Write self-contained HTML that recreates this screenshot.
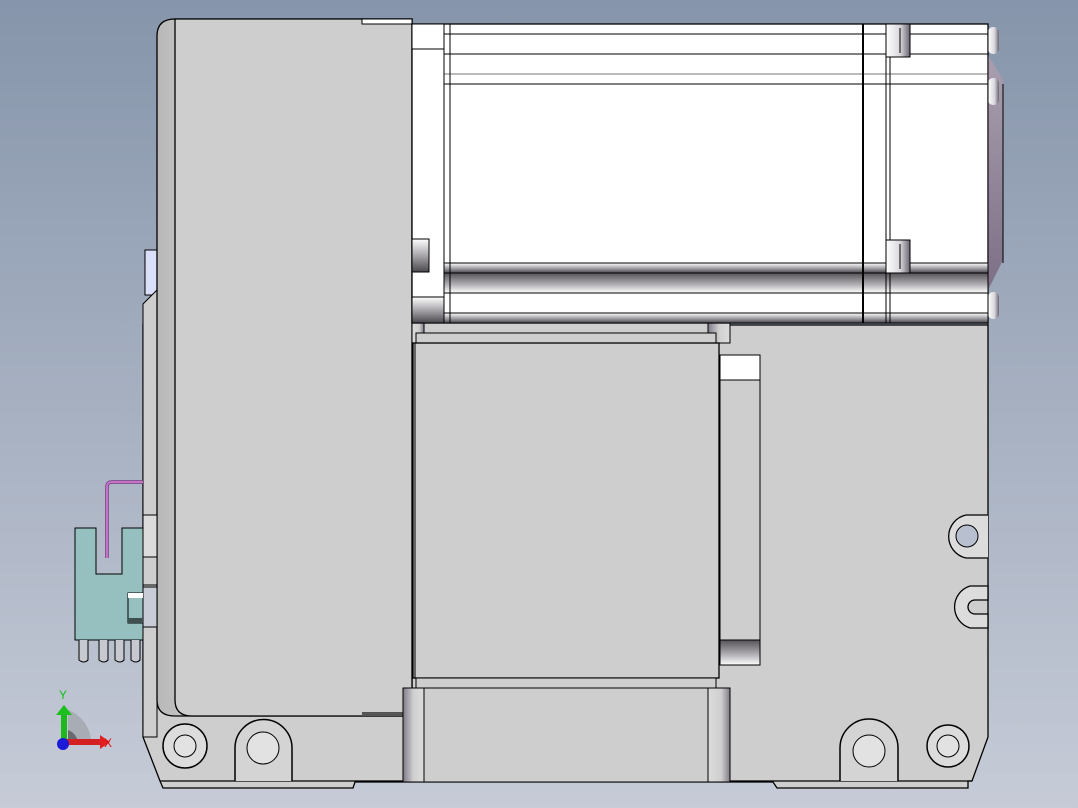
<!DOCTYPE html>
<html><head><meta charset="utf-8"><style>
html,body{margin:0;padding:0;width:1078px;height:808px;overflow:hidden}
svg{display:block}
</style></head><body>
<svg width="1078" height="808" viewBox="0 0 1078 808" xmlns="http://www.w3.org/2000/svg" font-family="Liberation Sans, sans-serif">
<defs>
<linearGradient id="bg" x1="0" y1="0" x2="0" y2="1">
<stop offset="0" stop-color="#8695ab"/><stop offset="1" stop-color="#c6cbd7"/></linearGradient>
<linearGradient id="cyl" x1="0" y1="0" x2="0" y2="1">
<stop offset="0" stop-color="#ffffff"/><stop offset="0.5" stop-color="#a8a6ab"/><stop offset="1" stop-color="#4a474e"/></linearGradient>
<linearGradient id="cyl2" x1="0" y1="0" x2="0" y2="1">
<stop offset="0" stop-color="#555258"/><stop offset="0.6" stop-color="#b5b3b8"/><stop offset="1" stop-color="#ffffff"/></linearGradient>
<linearGradient id="vcol" x1="0" y1="0" x2="1" y2="0">
<stop offset="0" stop-color="#807a88"/><stop offset="0.5" stop-color="#d0d0d0"/><stop offset="1" stop-color="#dcdcdc"/></linearGradient>
<linearGradient id="vcol2" x1="0" y1="0" x2="1" y2="0">
<stop offset="0" stop-color="#dcdcdc"/><stop offset="0.6" stop-color="#cfcfcf"/><stop offset="1" stop-color="#807a88"/></linearGradient>
<linearGradient id="edge" x1="0" y1="0" x2="1" y2="0">
<stop offset="0" stop-color="#b8b8b8"/><stop offset="0.4" stop-color="#dedede"/><stop offset="1" stop-color="#cfcfcf"/></linearGradient>
<linearGradient id="plate" x1="0" y1="0" x2="0" y2="1">
<stop offset="0" stop-color="#aa9fb0"/><stop offset="1" stop-color="#7d6f86"/></linearGradient>
<linearGradient id="bolt" x1="0" y1="0" x2="1" y2="0">
<stop offset="0" stop-color="#ffffff"/><stop offset="0.6" stop-color="#d8d6dc"/><stop offset="1" stop-color="#6b6570"/></linearGradient>
</defs>
<rect width="1078" height="808" fill="url(#bg)"/>

<path d="M143 325 H988 V737 L972 781 H968 V788 H777 L773 782 H355 L353 788 H163 L160 781 L143 737 Z" fill="#cecece" stroke="#000" stroke-width="1.3"/>
<line x1="160" y1="781" x2="972" y2="781" stroke="#000" stroke-width="1.3"/>
<rect x="145" y="250" width="12" height="45" fill="#dbe0fa" stroke="#000"/>
<path d="M143 304 L157 290 V737 H143 Z" fill="#cecece" stroke="#000"/>

<path d="M157 36 Q157 19 175 19 H412 V716 H175 Q157 716 157 700 Z" fill="url(#edge)" stroke="#000" stroke-width="1.3"/>
<path d="M175 19 H412 V716 H192 Q175 716 175 700 Z" fill="#cecece" stroke="#000" stroke-width="1.3"/>
<rect x="362" y="19" width="50" height="5" fill="#fff" stroke="#000"/>
<rect x="362" y="712" width="50" height="4" fill="#555"/>

<rect x="412" y="323" width="318" height="20" fill="#cecece" stroke="#000"/>
<rect x="412" y="323" width="12" height="20" fill="url(#vcol2)" stroke="#000"/>
<rect x="708" y="323" width="22" height="20" fill="url(#vcol)" stroke="#000"/>
<rect x="416" y="333" width="300" height="10" fill="#cecece" stroke="#000"/>
<rect x="413" y="343" width="306" height="335" fill="#cecece" stroke="#000" stroke-width="1.3"/>
<line x1="415" y1="343" x2="415" y2="678" stroke="#000"/>
<rect x="720" y="355" width="40" height="25" fill="#fff" stroke="#000"/>
<rect x="720" y="380" width="40" height="260" fill="#cecece" stroke="#000"/>
<rect x="720" y="640" width="40" height="25" fill="url(#cyl2)" stroke="#000"/>
<rect x="416" y="678" width="300" height="10" fill="#cecece" stroke="#000"/>
<rect x="403" y="688" width="21" height="94" fill="url(#vcol)" stroke="#000"/>
<rect x="708" y="688" width="22" height="94" fill="url(#vcol2)" stroke="#000"/>
<rect x="424" y="688" width="284" height="94" fill="#cecece" stroke="#000"/>

<rect x="412" y="24" width="576" height="299" fill="#fff" stroke="#000" stroke-width="1.3"/>
<rect x="412" y="24" width="32" height="25" fill="#fff" stroke="#000"/>
<rect x="412" y="297" width="32" height="26" fill="url(#cyl)" stroke="#000"/>
<rect x="444" y="263" width="544" height="10" fill="url(#cyl)" stroke="#000"/>
<rect x="444" y="273" width="544" height="20" fill="url(#cyl2)" stroke="#000"/>
<rect x="444" y="293" width="544" height="20" fill="#fff" stroke="#000"/>
<rect x="444" y="313" width="544" height="10" fill="url(#cyl)" stroke="#000"/>
<line x1="444" y1="34" x2="988" y2="34" stroke="#000"/>
<line x1="444" y1="54" x2="988" y2="54" stroke="#000"/>
<line x1="444" y1="74" x2="988" y2="74" stroke="#777"/>
<line x1="444" y1="84" x2="988" y2="84" stroke="#000"/>
<line x1="444" y1="24" x2="444" y2="323" stroke="#000"/>
<line x1="450" y1="24" x2="450" y2="323" stroke="#000"/>
<line x1="863" y1="24" x2="863" y2="323" stroke="#000" stroke-width="2"/>
<line x1="886" y1="24" x2="886" y2="323" stroke="#000"/>
<line x1="890" y1="24" x2="890" y2="323" stroke="#000"/>
<rect x="886" y="24" width="24" height="33" fill="url(#bolt)" stroke="#000"/>
<line x1="900" y1="28" x2="900" y2="53" stroke="#000"/>
<rect x="886" y="240" width="24" height="33" fill="url(#bolt)" stroke="#000"/>
<line x1="900" y1="244" x2="900" y2="269" stroke="#000"/>
<rect x="412" y="239" width="17" height="33" fill="url(#cyl)" stroke="#000"/>
<path d="M988 55 L1003 80 V260 L988 290 Z" fill="url(#plate)"/>
<line x1="1003" y1="84" x2="1003" y2="263" stroke="#000"/>
<rect x="988" y="27" width="11" height="27" rx="5" fill="url(#bolt)"/>
<rect x="988" y="78" width="11" height="27" rx="5" fill="url(#bolt)"/>
<rect x="988" y="292" width="11" height="27" rx="5" fill="url(#bolt)"/>
<line x1="988" y1="24" x2="988" y2="325" stroke="#000"/>

<circle cx="185" cy="746" r="22" fill="#dcdcdc" stroke="#000" stroke-width="1.5"/>
<circle cx="185" cy="746" r="11" fill="#e2e2e2" stroke="#000"/>
<path d="M235 781 V748 A28 28 0 0 1 292 748 V781" fill="#d4d4d4" stroke="#000" stroke-width="1.5"/>
<circle cx="263" cy="748" r="16" fill="#e2e2e2" stroke="#000"/>
<path d="M840 781 V748 A29 29 0 0 1 898 748 V781" fill="#d4d4d4" stroke="#000" stroke-width="1.5"/>
<circle cx="869" cy="751" r="16" fill="#e2e2e2" stroke="#000"/>
<circle cx="948" cy="746" r="21" fill="#dcdcdc" stroke="#000" stroke-width="1.5"/>
<circle cx="948" cy="746" r="11" fill="#e2e2e2" stroke="#000"/>
<path d="M988 515 H966 A22 22 0 0 0 966 558 H988" fill="#dcdcdc" stroke="#000" stroke-width="1.3"/>
<circle cx="967" cy="536" r="11" fill="#b8c0cf" stroke="#000"/>
<path d="M988 586 H970 A22 22 0 0 0 970 628 H988 V614 H975 A6 6 0 0 1 975 600 H988 Z" fill="#dcdcdc" stroke="#000" stroke-width="1.3"/>

<rect x="143" y="515" width="14" height="42" fill="#dcdcdc" stroke="#000"/>
<rect x="143" y="557" width="14" height="28" fill="#cecece" stroke="#000"/>
<rect x="143" y="587" width="14" height="40" fill="#c8ccd6" stroke="#000"/>
<path d="M143 482 H112 Q107 482 107 487 V558" fill="none" stroke="#7a3a80" stroke-width="3.5"/>
<path d="M143 482 H112 Q107 482 107 487 V558" fill="none" stroke="#c273c8" stroke-width="2"/>
<path d="M75 528 H96 V574 H122 V528 H143 V640 H75 Z" fill="#96c0bf" stroke="#000"/>
<rect x="128" y="593" width="15" height="30" fill="#96c0bf" stroke="#000"/>
<rect x="128" y="593" width="15" height="5" fill="#fff"/>
<rect x="128" y="618" width="15" height="5" fill="#3e5050"/>
<g fill="#c6cad0" stroke="#000">
<path d="M79 640 V660 Q84 664 88 660 V640"/>
<path d="M99 640 V660 Q104 664 108 660 V640"/>
<path d="M115 640 V660 Q120 664 124 660 V640"/>
<path d="M131 640 V660 Q136 664 140 660 V640"/>
</g>

<path d="M68 745 V710 A35 35 0 0 1 91 745 Z" fill="#a8acb4"/>
<path d="M68 745 V730 A15 15 0 0 1 78 745 Z" fill="#6a6a6e"/>
<rect x="61" y="713" width="6" height="30" fill="#1cb81c"/>
<path d="M56 715 L64 705 L72 715 Z" fill="#1cc01c"/>
<rect x="66" y="739" width="36" height="6" fill="#d42020"/>
<path d="M100 735 L110 742 L100 749 Z" fill="#e02020"/>
<circle cx="63" cy="744" r="6" fill="#1a1ad8"/>
<text x="59" y="699" font-size="12" fill="#10c010">Y</text>
<text x="104" y="747" font-size="12" fill="#e01010">X</text>
</svg>
</body></html>
